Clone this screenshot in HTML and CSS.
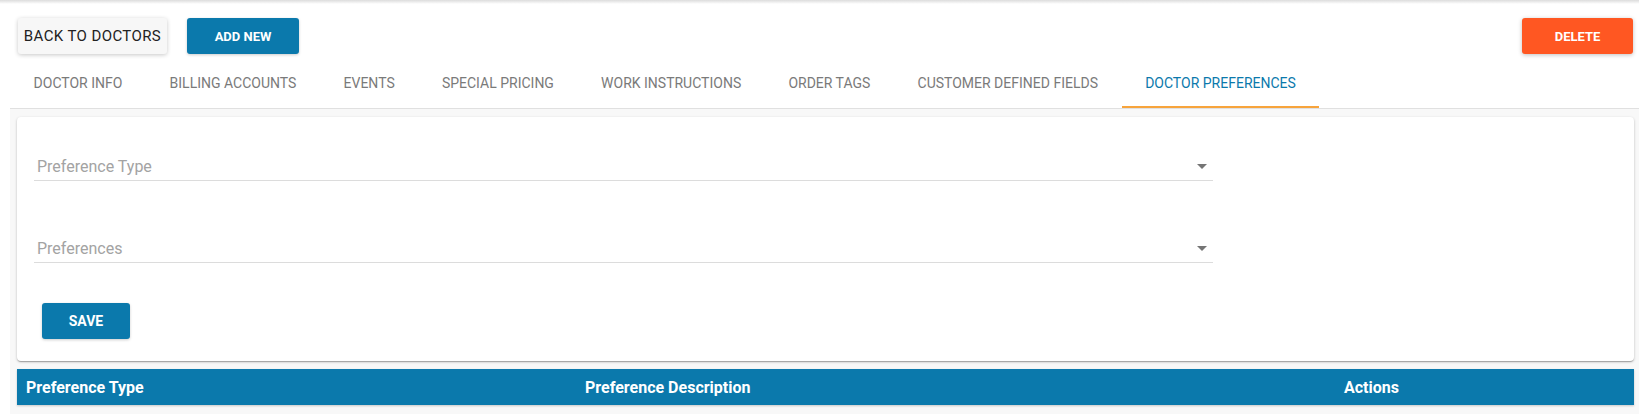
FILE: index.html
```html
<!DOCTYPE html>
<html lang="en">
<head>
    <meta charset="UTF-8">
    <meta name="viewport" content="width=device-width, initial-scale=1.0">
    <title>Doctor Preferences</title>
    <link rel="stylesheet" href="styles.css">
</head>
<body>
    <div class="topbar-shadow"></div>

    <!-- Actions -->
    <div class="toolbar">
        <button class="btn btn-light">BACK TO DOCTORS</button>
        <button class="btn btn-primary btn-add">ADD NEW</button>
        <button class="btn btn-danger">DELETE</button>
    </div>

    <!-- Tabs -->
    <div class="tabs">
        <div class="tab">DOCTOR INFO</div>
        <div class="tab">BILLING ACCOUNTS</div>
        <div class="tab">EVENTS</div>
        <div class="tab">SPECIAL PRICING</div>
        <div class="tab">WORK INSTRUCTIONS</div>
        <div class="tab">ORDER TAGS</div>
        <div class="tab">CUSTOMER DEFINED FIELDS</div>
        <div class="tab active">DOCTOR PREFERENCES</div>
    </div>

    <div class="content">
        <div class="card">
            <div class="field field-first">
                <span class="field-label">Preference Type</span>
                <span class="caret"></span>
            </div>
            <div class="field">
                <span class="field-label">Preferences</span>
                <span class="caret"></span>
            </div>
            <button class="btn btn-primary btn-save">SAVE</button>
        </div>

        <table class="grid">
            <thead>
                <tr>
                    <th class="col-type">Preference Type</th>
                    <th class="col-desc">Preference Description</th>
                    <th>Actions</th>
                </tr>
            </thead>
        </table>
    </div>
</body>
</html>
```

FILE: styles.css
```css
body {
    margin: 0;
    font-family: Roboto, "Liberation Sans", Arial, sans-serif;
    background-color: #fff;
    overflow: hidden;
}
.topbar-shadow {
    height: 4px;
    background: linear-gradient(#dcdcdc, #fff);
}
.toolbar {
    display: flex;
    padding: 14px 6px 0 18px;
}
.btn {
    height: 36px;
    border: none;
    border-radius: 3px;
    font-family: inherit;
    cursor: pointer;
    padding: 0;
}
.btn-light {
    width: 149px;
    background-color: #f7f7f7;
    color: #222;
    font-size: 15px;
    letter-spacing: 0.4px;
    box-shadow: 0 1px 4px rgba(0, 0, 0, 0.22);
}
.btn-primary {
    background-color: #0b79ac;
    color: #fff;
    font-size: 13px;
    font-weight: bold;
    box-shadow: 0 1px 3px rgba(0, 0, 0, 0.2);
}
.btn-add {
    width: 112px;
    margin-left: 20px;
}
.btn-danger {
    width: 111px;
    margin-left: auto;
    background-color: #ff5722;
    color: #fff;
    font-size: 13px;
    font-weight: bold;
    box-shadow: 0 1px 4px rgba(0, 0, 0, 0.25);
}
.tabs {
    display: flex;
    height: 48px;
    margin: 6px 0 0 10px;
    border-bottom: 1px solid #e0e0e0;
}
.tab {
    position: relative;
    padding: 0 23.6px;
    line-height: 47px;
    font-size: 14px;
    color: #7a7a7a;
    white-space: nowrap;
}
.tab.active {
    color: #0b79ac;
}
.tab.active::after {
    content: "";
    position: absolute;
    left: 0;
    right: 0;
    bottom: 0;
    height: 2px;
    background-color: #f7a43c;
}
.content {
    margin-left: 10px;
    background-color: #f8f8f8;
    padding: 8px 5px 12px 7px;
}
.card {
    background-color: #fff;
    border-radius: 4px;
    padding: 34px 17px 22px 17px;
    box-shadow: 0 1px 3px rgba(0, 0, 0, 0.2), 0 1px 1px rgba(0, 0, 0, 0.14), 0 2px 1px -1px rgba(0, 0, 0, 0.12);
}
.field {
    display: flex;
    align-items: center;
    width: 1179px;
    height: 30px;
    padding-top: 2px;
    box-sizing: border-box;
    border-bottom: 1px solid #dcdcdc;
    margin-top: 52px;
}
.field-first {
    margin-top: 0;
}
.field-label {
    flex: 1;
    padding-left: 3px;
    font-size: 16px;
    color: #a3a3a3;
}
.caret {
    width: 0;
    height: 0;
    margin-right: 6px;
    border-left: 5px solid transparent;
    border-right: 5px solid transparent;
    border-top: 5px solid #757575;
}
.btn-save {
    display: block;
    width: 88px;
    margin: 40px 0 0 8px;
    font-size: 14px;
}
.grid {
    width: 100%;
    margin-top: 8px;
    border-collapse: collapse;
    table-layout: fixed;
    box-shadow: 0 1px 2px rgba(0, 0, 0, 0.2);
}
.grid th {
    height: 36px;
    padding: 0 9px;
    background-color: #0b79ac;
    color: #fff;
    font-size: 16px;
    font-weight: bold;
    text-align: left;
}
.col-type {
    width: 541px;
}
.col-desc {
    width: 741px;
}
```
